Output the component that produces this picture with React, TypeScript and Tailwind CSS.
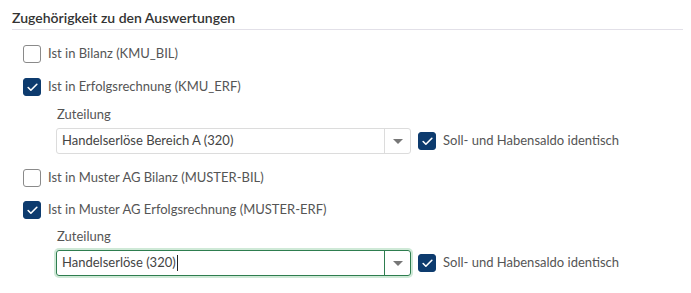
import React from 'react';
import { Check } from 'lucide-react';

const Box = ({ checked }: { checked: boolean }) => (
    <span
        className={`flex h-[18px] w-[18px] shrink-0 items-center justify-center rounded-[3px] border ${checked ? 'border-[#0d3b6e] bg-[#0d3b6e]' : 'border-[#8a8a8a] bg-white'}`}
    >
        {checked && <Check className="h-[13px] w-[13px] text-white" strokeWidth={3} />}
    </span>
);

const Row = ({ checked, label }: { checked: boolean; label: string }) => (
    <label className="flex h-[18px] items-center gap-[7px] pl-[23px]">
        <Box checked={checked} />
        <span className="text-[13px] text-[#555]">{label}</span>
    </label>
);

const Assign = ({ value, focused }: { value: string; focused?: boolean }) => (
    <div className="flex flex-col pl-[56px]">
        <span className="mb-[6px] pl-px text-[13px] leading-[16px] text-[#555]">Zuteilung</span>
        <div className="flex items-center gap-[7px]">
            <div
                className={`flex h-[26px] w-[355px] items-stretch rounded-[3px] border ${focused ? 'border-[#2e7d4f] shadow-[0_0_0_2px_#cfe9d7]' : 'border-[#dcdcdc]'}`}
            >
                <div className="flex flex-1 items-center pl-[5px] text-[13px] text-[#444]">
                    {value}
                    {focused && <span className="ml-px h-[16px] w-px bg-[#222]" />}
                </div>
                <div
                    className={`flex w-[26px] items-center justify-center border-l ${focused ? 'border-[#2e7d4f]' : 'border-[#dcdcdc]'}`}
                >
                    <span className="h-0 w-0 border-x-[5px] border-t-[5px] border-x-transparent border-t-[#777]" />
                </div>
            </div>
            <label className="flex items-center gap-[7px]">
                <Box checked />
                <span className="text-[13px] text-[#555]">Soll- und Habensaldo identisch</span>
            </label>
        </div>
    </div>
);

export default function App() {
    return (
        <div className="h-[293px] w-[691px] bg-white pt-[9px] font-['Lato',sans-serif]">
            <div className="mx-[12px] mr-[8px] border-b border-[#e2e0e8] pb-[2px]">
                <h2 className="text-[14px] font-semibold leading-[18px] text-[#333]">
                    Zugehörigkeit zu den Auswertungen
                </h2>
            </div>
            <div className="mt-[15px] flex flex-col">
                <Row checked={false} label="Ist in Bilanz (KMU_BIL)" />
                <div className="mt-[15px]">
                    <Row checked label="Ist in Erfolgsrechnung (KMU_ERF)" />
                </div>
                <div className="mt-[10px]">
                    <Assign value="Handelserlöse Bereich A (320)" />
                </div>
                <div className="mt-[15px]">
                    <Row checked={false} label="Ist in Muster AG Bilanz (MUSTER-BIL)" />
                </div>
                <div className="mt-[14px]">
                    <Row checked label="Ist in Muster AG Erfolgsrechnung (MUSTER-ERF)" />
                </div>
                <div className="mt-[9px]">
                    <Assign value="Handelserlöse (320)" focused />
                </div>
            </div>
        </div>
    );
}
